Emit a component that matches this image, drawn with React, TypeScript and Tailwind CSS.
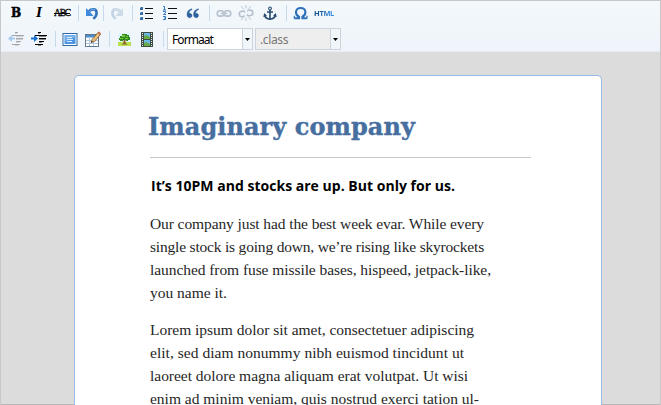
import { useLayoutEffect, useRef, useState, type ReactNode } from 'react';

/* Sets one line of copy to an exact measure by adjusting its tracking. */
function Line({ text, width, className = '' }: { text: string; width: number; className?: string }) {
  const ref = useRef<HTMLSpanElement>(null);
  const [spacing, setSpacing] = useState(0);
  useLayoutEffect(() => {
    if (ref.current) {
      const natural = ref.current.getBoundingClientRect().width;
      setSpacing((width - natural) / text.length);
    }
  }, [text, width]);
  return (
    <span className="block whitespace-nowrap">
      <span ref={ref} className={className} style={{ letterSpacing: `${spacing}px` }}>{text}</span>
    </span>
  );
}

function Icon({ className = '', children }: { className?: string; children: ReactNode }) {
  return (
    <svg viewBox="0 0 16 16" className={`h-4 w-4 shrink-0 ${className}`} fill="none">
      {children}
    </svg>
  );
}

function Sep({ className = '' }: { className?: string }) {
  return <span className={`h-4 w-px shrink-0 bg-[#c5dbed] ${className}`} />;
}

function Undo({ className = '', light = false }: { className?: string; light?: boolean }) {
  return (
    <Icon className={className}>
      <g transform={light ? 'translate(16 0) scale(-1 1)' : undefined}>
        <path d="M4.5 7.2C6.5 3.6 12.6 3 12.6 8c0 2.6-1.4 4.4-3.4 5.6" stroke={light ? '#c3d4e6' : '#3273bd'} strokeWidth="2.6" />
        <path d="M2 3v8h7.5L7 8 4.3 5.3z" fill={light ? '#cddbe9' : '#3f8add'} />
        <path d="M5.2 6.5C7.2 4.3 9.5 3.7 11.2 5" stroke={light ? '#dce7f1' : '#7ab5ee'} />
      </g>
    </Icon>
  );
}

function Indent({ out = false, className = '' }: { out?: boolean; className?: string }) {
  const ink = out ? '#a2a5a9' : '#000000';
  const arrow = out ? '#a7cbea' : '#1673cf';
  return (
    <Icon className={className}>
      <path d="M7 1.5h3M4 4.5h12M8 7.5h7M8 10.5h5M4 13.5h8" stroke={ink} />
      <path d="M7 2.5h2M8 5.5h7M8 8.5h7M8 11.5h3M7 14.5h3" stroke={ink} opacity=".45" />
      <path d={out ? 'M0 7.5 4 4v2.5h3v2H4V11z' : 'M7 7.5 3 4v2.5H0v2h3V11z'} fill={arrow} />
    </Icon>
  );
}

function ChainLink({ broken = false, className = '' }: { broken?: boolean; className?: string }) {
  return (
    <Icon className={className}>
      <g transform={broken ? 'rotate(-8 8 8)' : undefined}>
        <rect x="1.2" y="5.7" width="6.6" height="5.4" rx="2.7" stroke="#b5c1ce" strokeWidth="1.6" />
        <rect x="8.2" y="5.7" width="6.6" height="5.4" rx="2.7" stroke="#b5c1ce" strokeWidth="1.6" />
        {broken ? <path d="M6.8 13 9.2 3" stroke="#f1f6fa" strokeWidth="2" /> : <path d="M4.5 8.4h7" stroke="#bdc8d4" strokeWidth="1.5" />}
      </g>
      {broken && <path d="m3 1 2.5 3M8 0v3.5M13 1l-2.5 3M3 15l2.5-3M8 16v-3.5M13 15l-2.5-3" stroke="#bfc8d1" />}
    </Icon>
  );
}

function Select({ label, disabled = false, className = '' }: { label: string; disabled?: boolean; className?: string }) {
  return (
    <div className={`flex h-[22px] w-[86px] shrink-0 border border-[#ccd3da] font-['Noto_Sans','Open_Sans',sans-serif] text-[12px] leading-[21px] ${disabled ? 'bg-[#eeeeee] text-[#777777]' : 'bg-white text-black'} ${className}`}>
      <span className="flex-1 pl-1"><Line text={label} width={disabled ? 28 : 41} /></span>
      <span className="flex w-[10px] items-center justify-center border-l border-[#ccd3da] bg-[#f1f6fb]">
        <svg viewBox="0 0 5 3" className="h-[3px] w-[5px]"><path d="M0 0h5L2.5 3z" fill="#000" /></svg>
      </span>
    </div>
  );
}

function Toolbar() {
  return (
    <div className="h-[51px] shrink-0 border-b border-[#e6ecf1] bg-linear-to-b from-[#f3f8fb] to-[#eef4fa] font-['Liberation_Serif',serif]">
      <div className="flex h-[26px] items-center pb-[2px] pl-[7px]">
        <span className="w-4 text-center font-['DejaVu_Serif',serif] text-[12px] leading-4 font-bold [-webkit-text-stroke:0.5px_black]">B</span>
        <span className="ml-[7px] w-4 text-center font-['DejaVu_Serif',serif] text-[12px] leading-4 font-bold italic">I</span>
        <span className="relative ml-[7px] w-4 text-[9.5px] leading-[17px] [-webkit-text-stroke:0.3px_black]">
          <Line text="ABC" width={16} />
          <span className="absolute top-[8px] left-0 h-px w-4 bg-black" />
        </span>
        <Sep className="ml-2" />
        <Undo className="ml-[5px]" />
        <Sep className="ml-[3px]" />
        <Undo light className="ml-[5px]" />
        <Sep className="ml-[7px]" />
        <Icon className="ml-[6px]">
          <path d="M6 3.5h8M6 8.5h8M6 13.5h8" stroke="#111" />
          <path d="M1 2h3v3H1zM1 7h3v3H1zM1 12h3v3H1z" fill="#376ca6" />
          <path d="M1 2h1v1H1zM1 7h1v1H1zM1 12h1v1H1z" fill="#8bb4db" />
        </Icon>
        <Icon className="ml-[7px]">
          <path d="M6 3.5h9M6 8.5h9M6 13.5h9" stroke="#111" />
          <path d="M1 1.5h1.5V5M1 5h3M1 6.5h2.5V8L1.5 9.5H4M1 11.5h2.5v3H1M2 13h1.5" stroke="#3479bd" />
        </Icon>
        <Icon className="ml-[7px]">
          <path d="M7 3.8C3.8 4.3 2 6.3 2 9.5 2 11.3 3 12.8 4.6 12.8c1.4 0 2.4-1 2.4-2.3S6 8.3 4.8 8.3H4c.2-1.8 1.2-3 3-3.6zM13.5 3.8c-3.2.5-5 2.5-5 5.7 0 1.8 1 3.3 2.6 3.3 1.4 0 2.4-1 2.4-2.3s-1-2.2-2.2-2.2h-.8c.2-1.8 1.2-3 3-3.6z" fill="#2d619d" stroke="#2d619d" strokeWidth=".4" />
        </Icon>
        <Sep className="ml-2" />
        <ChainLink className="ml-[6px]" />
        <ChainLink broken className="ml-[6px]" />
        <Icon className="ml-2">
          <circle cx="8" cy="3.5" r="1.4" stroke="#416282" strokeWidth="1.2" />
          <path d="M8 5v9M5 7h6" stroke="#274b70" strokeWidth="1.6" />
          <path d="M2.7 9.5c.2 3 2.3 4.6 5.3 4.6s5.1-1.6 5.3-4.6" stroke="#274b70" strokeWidth="1.8" />
          <path d="M1.3 12 2.2 8l2.8 3zM14.7 12l-.9-4-2.8 3z" fill="#274b70" />
        </Icon>
        <Sep className="ml-2" />
        <Icon className="ml-[6px]">
          <path d="M1.5 13.2H6v-1.4C4 10.8 3 9.2 3 7.2 3 4.5 5 3 7.7 3s4.7 1.5 4.7 4.2c0 2-1 3.6-3 4.6v1.4h4.3" stroke="#2b70b9" strokeWidth="2.1" />
          <path d="M1.3 10.8v3M14 10.8v3" stroke="#2b70b9" strokeWidth="1.2" />
        </Icon>
        <span className="ml-[5px] font-['Open_Sans',sans-serif] text-[7.5px] leading-[15px] font-bold text-transparent">
          <Line text="HTML" width={20} className="bg-linear-to-r from-[#0d4580] to-[#3a94ea] bg-clip-text" />
        </span>
      </div>
      <div className="flex h-6 items-center pl-[7px]">
        <Indent out />
        <Indent className="ml-[7px]" />
        <Sep className="ml-2" />
        <Icon className="ml-[6px]">
          <rect x="1" y="2.5" width="14" height="12" fill="#fff" stroke="#2c67a8" />
          <path d="M2.5 4h11v9h-11z" fill="#4b94e2" />
          <path d="M2.5 4h11v2l-11 5z" fill="#8fc1f2" opacity=".6" />
          <path d="M5 6.5h5M5 8.5h6M5 10.5h5" stroke="#d9ebfd" />
        </Icon>
        <Icon className="ml-[7px]">
          <rect x=".5" y="3.5" width="13" height="12" fill="#fff" stroke="#60768c" />
          <path d="M1 4h12v2.5H1z" fill="#4e8dcd" />
          <path d="M1 9.5h12M1 12.5h12M4.5 6.5V15M8.5 6.5V15" stroke="#b2c8dc" />
          <path d="m6 11.5 1-3 6-7 2.5 2-6 7z" fill="#ecbd78" stroke="#775332" strokeWidth=".8" />
          <path d="m12.5 1.7 1.3-1.2L16 2.3l-1 1.5z" fill="#bf674c" />
          <path d="m6 11.5.5-1.6L8 11z" fill="#222" />
        </Icon>
        <Sep className="ml-2" />
        <Icon className="ml-[6px]">
          <rect x="2" y="2" width="13" height="13" fill="#e3f4fd" />
          <path d="M2 11h13v4H2z" fill="#b9e04f" />
          <path d="M7.5 8h2v4l2 1.5h-6l2-1.5z" fill="#8e5b27" />
          <path d="M3 7h1V5h2V3h5v1h2v2h1v3h-2v1h-2V9H7v1H4V9H3z" fill="#2f8a20" />
          <path d="M6 4h3v2H6zM10 5h2v1h-2zM4 7h3v1H4zM9 7h3v1H9z" fill="#7cc83c" />
        </Icon>
        <Icon className="ml-[7px]">
          <path d="M2 1h12v15H2z" fill="#3e4c46" />
          <path d="M5 2h6v6H5zM5 9h6v6H5z" fill="#69b8e5" />
          <path d="M5 5l2-1 4 2v2H5zM5 12l2-1 4 2v2H5z" fill="#67a947" />
          <path d="M3.5 2v13M12.5 2v13" stroke="#e3e8e5" strokeDasharray="1 1" />
        </Icon>
        <Sep className="ml-2" />
        <Select label="Formaat" className="ml-[3px]" />
        <Select label=".class" disabled className="ml-[2px]" />
      </div>
    </div>
  );
}

const first: [string, number][] = [
  ['Our company just had the best week evar. While every', 334],
  ['single stock is going down, we’re rising like skyrockets', 334],
  ['launched from fuse missile bases, hispeed, jetpack-like,', 341],
  ['you name it.', 77],
];
const second: [string, number][] = [
  ['Lorem ipsum dolor sit amet, consectetuer adipiscing', 324],
  ['elit, sed diam nonummy nibh euismod tincidunt ut', 314],
  ['laoreet dolore magna aliquam erat volutpat. Ut wisi', 318],
  ['enim ad minim veniam, quis nostrud exerci tation ul-', 329],
];

export default function App() {
  return (
    <div className="flex h-[405px] w-[661px] flex-col overflow-hidden border border-b-0 border-[#c8c8c8] bg-[#dcdcdc]">
      <Toolbar />
      <div className="flex h-[353px] shrink-0">
        <div className="w-[73px] shrink-0 border-b border-[#b8b8b8]" />
        <main className="mt-[23px] w-[528px] shrink-0 rounded-t-[5px] border border-b-0 border-[#97bde4] bg-white pl-[75px]">
          <h1 className="-ml-[2px] pt-[35px] font-['DejaVu_Serif',serif] text-[24px] leading-8 font-bold text-[#466e9f] [-webkit-text-stroke:0.4px_#466e9f]">
            <Line text="Imaginary company" width={267} />
          </h1>
          <div className="mt-[14px] h-px w-[381px] bg-[#c6c6c6]" />
          <h2 className="mt-[18px] ml-px font-['Open_Sans',sans-serif] text-[14px] leading-5 font-bold text-black">
            <Line text="It’s 10PM and stocks are up. But only for us." width={304} />
          </h2>
          <div className="mt-[16px] font-['Liberation_Serif',serif] text-[15.5px] leading-[23px] text-[#262626]">
            <p>{first.map(([t, w]) => <Line key={t} text={t} width={w} />)}</p>
            <p className="mt-[14px]">{second.map(([t, w]) => <Line key={t} text={t} width={w} />)}</p>
          </div>
        </main>
        <div className="flex-1 border-b border-[#b8b8b8]" />
      </div>
    </div>
  );
}
